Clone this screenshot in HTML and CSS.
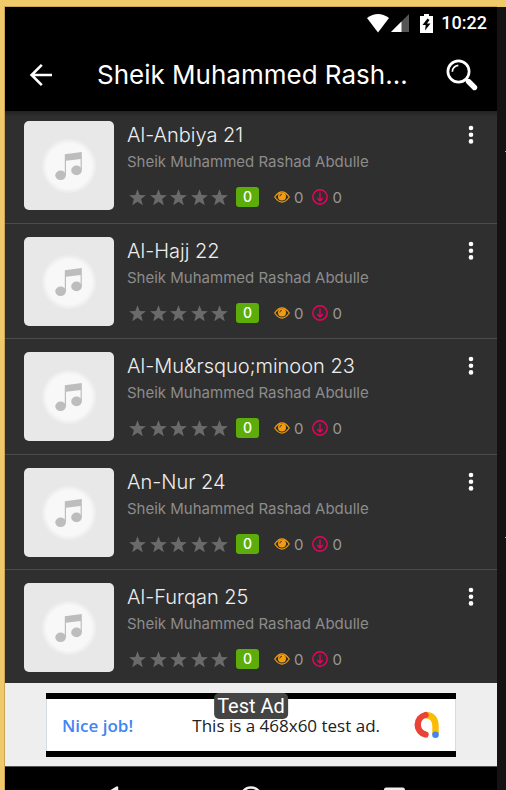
FILE: index.html
```
<!DOCTYPE html>
<html lang="en">
<head>
<meta charset="utf-8">
<meta name="viewport" content="width=device-width, initial-scale=1">
<title>Sheik Muhammed Rashad Abdulle</title>
<link rel="stylesheet" href="styles.css">
</head>
<body>
<svg class="defs" aria-hidden="true">
  <defs>
    <radialGradient id="glow"><stop offset="0.8" stop-color="#f8f8f8"/><stop offset="1" stop-color="#e8e8e8"/></radialGradient>
    <symbol id="note" viewBox="0 0 90 89">
      <circle cx="45" cy="45" r="28" fill="url(#glow)"/>
      <g fill="#bdbdbd"><path d="M40.800 33.300 L57.800 31 V49.500 H56.600 V38 L42 39.800 V54 H40.800 Z"/><ellipse cx="36.600" cy="54.300" rx="5.300" ry="4.800"/><ellipse cx="52.500" cy="49.400" rx="5.300" ry="4.800"/></g>
    </symbol>
    <symbol id="star" viewBox="0 0 17 17"><path fill="#6a6a6a" d="M8.500 .2 L10.700 5.900 L16.900 6.200 L12.100 10 L13.800 16.300 L8.500 12.800 L3.200 16.300 L4.900 10 L.1 6.200 L6.300 5.900 Z"/></symbol>
    <symbol id="eye" viewBox="0 0 16 12"><path fill="none" stroke="#f39c12" stroke-width="1.200" d="M.7 6 Q8 -4.200 15.300 6 Q8 16.200 .7 6 Z"/><circle cx="8" cy="5.600" r="4" fill="#f39c12"/><path fill="none" stroke="#2f2f2f" stroke-width=".9" d="M5.800 5.500 A2.400 2.400 0 0 1 8 3.200"/></symbol>
    <symbol id="down" viewBox="0 0 16 16"><circle cx="8" cy="8" r="7.200" fill="none" stroke="#f0005f" stroke-width="1.400"/><path fill="none" stroke="#f0005f" stroke-width="1.300" d="M8 3.500 V12 M5.300 9 L8 12 L10.700 9"/></symbol>
    <symbol id="dots" viewBox="0 0 6 20"><g fill="#fff"><circle cx="3" cy="3" r="2.300"/><circle cx="3" cy="9.700" r="2.300"/><circle cx="3" cy="16.400" r="2.300"/></g></symbol>
  </defs>
</svg>
<div class="phone">
  <header class="top">
    <div class="status">
      <svg class="wifi" viewBox="0 0 22 19" aria-hidden="true"><path fill="#fff" d="M0 4 Q11 -4 22 4 L11 18.500 Z"/></svg>
      <svg class="signal" viewBox="0 0 18 18" aria-hidden="true"><path fill="#555" d="M18 0 V18 H0 Z"/><path fill="#fff" d="M10.500 7.500 V18 H0 Z"/></svg>
      <svg class="battery" viewBox="0 0 13 19" aria-hidden="true"><path fill="#fff" d="M4 0 H9 V2 H13 V19 H0 V2 H4 Z"/><path fill="#000" d="M7.500 4.500 L2.500 11 H5.700 L5 16.500 L10.500 9.500 H7 L9.500 6 Z"/></svg>
      <time>10:22</time>
    </div>
    <div class="bar">
      <button class="icon back" aria-label="Back"><svg viewBox="0 0 24 24"><path fill="none" stroke="#fff" stroke-width="2.600" d="M23 12 H3 M12.800 1.800 L2.600 12 L12.800 22.200"/></svg></button>
      <h1>Sheik Muhammed Rash...</h1>
      <button class="icon search" aria-label="Search"><svg viewBox="0 0 32 32"><circle cx="12.500" cy="12.500" r="10.600" fill="none" stroke="#fff" stroke-width="2.700"/><path fill="none" stroke="#fff" stroke-width="1.700" d="M6.300 12.800 A6.500 6.500 0 0 1 12.300 6.300"/><path stroke="#fff" stroke-width="2" d="M19.500 19.500 L23 23"/><path stroke="#fff" stroke-width="5.400" d="M22.500 22.500 L28.500 28.500" stroke-linecap="round"/></svg></button>
    </div>
  </header>
  <ul class="list" id="list"></ul>
  <aside class="ad" aria-label="Advertisement">
    <div class="banner">
      <strong>Nice job!</strong>
      <span class="copy">This is a 468x60 test ad.</span>
      <svg class="logo" viewBox="0 0 28 28" aria-hidden="true"><path fill="none" stroke="#fbbc04" stroke-width="6.400" d="M14 4 Q23.500 5 23.500 15 V24"/><path fill="none" stroke="#ea4335" stroke-width="6.400" stroke-linecap="round" d="M13.500 4 A10 10 0 0 0 13.500 23.500"/><circle cx="23.500" cy="23.700" r="3.300" fill="#4285f4"/></svg>
      <span class="tag">Test Ad</span>
    </div>
  </aside>
  <nav class="keys">
    <button aria-label="Back key"><svg viewBox="0 0 24 24"><path fill="none" stroke="#eee" stroke-width="2.500" stroke-linejoin="round" d="M21 1.500 V22 L4 12 Z"/></svg></button>
    <button aria-label="Home key"><svg viewBox="0 0 24 24"><circle cx="12" cy="12" r="10.500" fill="none" stroke="#eee" stroke-width="2.500"/></svg></button>
    <button aria-label="Recent apps"><svg viewBox="0 0 24 24"><rect x="3.200" y="2.700" width="18.500" height="18.500" rx="1" fill="#777" stroke="#eee" stroke-width="2.500"/></svg></button>
  </nav>
</div>
<div class="edge" aria-hidden="true"><i></i><i></i></div>
<script src="list.js"></script>
</body>
</html>
```
FILE: styles.css
```
* { box-sizing: border-box; }
html, body { height: 100%; }
body {
  margin: 0;
  display: flex;
  overflow: hidden;
  padding: 6px 0 0 4px;
  background: #f0c96b;
  font-family: Inter, "Liberation Sans", sans-serif;
}
.defs { position: absolute; width: 0; height: 0; }
svg { display: block; }
button { border: 0; padding: 0; background: none; cursor: pointer; }
.phone {
  flex: 1;
  min-width: 0;
  display: flex;
  flex-direction: column;
  border: solid #c9a555;
  border-width: 1px 0 0 1px;
  background: #000;
}
.edge {
  width: 9px;
  margin-top: 1px;
  background: #131313;
  display: flex;
  flex-direction: column;
  align-items: flex-end;
  gap: 385px;
  padding-top: 144px;
}
.edge i { width: 1px; height: 1px; background: #aaa; }
.top { background: #000; color: #fff; flex: none; }
.status {
  display: flex;
  align-items: center;
  justify-content: flex-end;
  height: 32px;
  padding-right: 10px;
  font: 500 18px/32px Roboto, sans-serif;
}
.wifi { width: 22px; height: 19px; }
.signal { width: 18px; height: 18px; margin: 0 11px 0 2px; }
.battery { width: 13px; height: 19px; margin-right: 8px; }
.bar { display: flex; align-items: center; height: 72px; padding: 0 19px 0 24px; }
.icon { flex: none; }
.back svg { width: 24px; height: 24px; }
.search svg { width: 32px; height: 32px; }
h1 {
  flex: 1;
  min-width: 0;
  margin: 0 24px 0 44px;
  font-size: 26px;
  font-weight: 400;
  line-height: 36px;
  white-space: nowrap;
}
.list {
  list-style: none;
  margin: 0;
  padding: 0;
  background: linear-gradient(#232323, #2f2f2f 6px);
}
.row {
  display: flex;
  gap: 13px;
  padding: 13px 19px 13px 19px;
  border-bottom: 1px solid #4b4b4b;
}
.row:nth-child(even) { padding-bottom: 12px; }
.row:first-child { padding-top: 10px; }
.row:last-child { padding-bottom: 11px; border: 0; }
.thumb { flex: none; width: 90px; height: 89px; border-radius: 5px; background: #e8e8e8; }
.info { flex: 1; min-width: 0; }
h2 { margin: 0; font-size: 20px; line-height: 28px; font-weight: 300; color: #eee; }
.info p { margin: 0; font-size: 15px; line-height: 26px; color: #8c8c8c; }
.meta { display: flex; align-items: center; margin-top: 10px; height: 24px; font-size: 15px; color: #999; }
.stars { display: flex; justify-content: space-between; width: 99px; margin: 0 8px 0 2px; }
.stars svg { width: 17px; height: 17px; }
.badge {
  width: 23px;
  height: 20px;
  margin-right: 15px;
  border-radius: 3px;
  background: #5cad0a;
  color: #fff;
  font-size: 14px;
  font-weight: 500;
  line-height: 19px;
  text-align: center;
}
.count { display: flex; align-items: center; gap: 4px; margin-right: 9px; }
.eye { width: 16px; height: 12px; }
.down { width: 16px; height: 16px; }
.more { flex: none; align-self: flex-start; padding: 4px; }
.more svg { width: 6px; height: 20px; }
.ad {
  flex: none;
  padding: 10px 41px 9px;
  background: #eee;
}
.banner {
  position: relative;
  display: flex;
  align-items: center;
  height: 64px;
  border: solid #000;
  border-width: 6px 0;
  padding: 0 16px;
  background: #fff;
  box-shadow: inset 1px 0 #d4dde2, inset -1px 0 #d4dde2;
  color: #202124;
  font: 17px "Open Sans", sans-serif;
}
.banner strong { color: #4285f4; font-weight: 600; }
.copy { margin: 0 32px 0 auto; }
.logo { width: 28px; height: 28px; }
.tag {
  position: absolute;
  top: -6px;
  left: 50%;
  transform: translateX(-50%);
  padding: 0 3px;
  border-radius: 5px;
  background: #444;
  color: #fff;
  font: 20px/26px Roboto, sans-serif;
  white-space: nowrap;
}
.keys { flex: 1 0 24px; display: flex; justify-content: center; gap: 119px; padding-top: 19px; border-top: 1px solid #555; overflow: hidden; }
.keys button { height: 24px; }
.keys svg { width: 24px; height: 24px; }
```
FILE: list.js
```
const artist = "Sheik Muhammed Rashad Abdulle";
const tracks = ["Al-Anbiya 21", "Al-Hajj 22", "Al-Mu&rsquo;minoon 23", "An-Nur 24", "Al-Furqan 25"];
const icon = (name, cls = name) => `<svg class="${cls}" aria-hidden="true"><use href="#${name}"/></svg>`;
const list = document.getElementById("list");

for (const track of tracks) {
  const row = document.createElement("li");
  row.className = "row";
  row.innerHTML = `
    ${icon("note", "thumb")}
    <div class="info">
      <h2></h2>
      <p>${artist}</p>
      <div class="meta">
        <span class="stars">${icon("star").repeat(5)}</span>
        <span class="badge">0</span>
        <span class="count">${icon("eye")}0</span>
        <span class="count">${icon("down")}0</span>
      </div>
    </div>
    <button class="more" aria-label="More options">${icon("dots")}</button>`;
  row.querySelector("h2").textContent = track;
  list.append(row);
}
```
